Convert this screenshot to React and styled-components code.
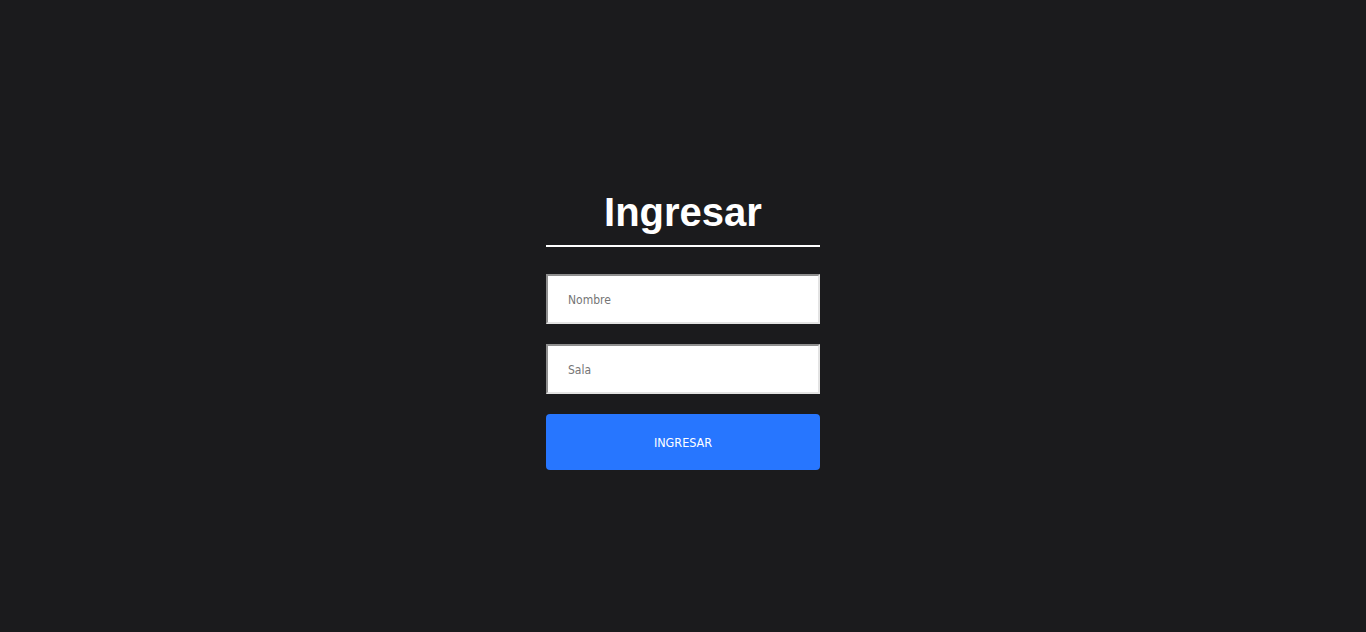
import React from "react";
import styled, { createGlobalStyle } from "styled-components";

const Global = createGlobalStyle`
  html, body { margin: 0; padding: 0; background: #1b1b1d; }
  body { font-family: "DejaVu Sans Condensed", "DejaVu Sans", sans-serif; }
`;

const Page = styled.div`
  min-height: 632px;
  display: flex;
  justify-content: center;
  padding-top: 190px;
  box-sizing: border-box;
`;

const Card = styled.div`
  width: 274px;
  display: flex;
  flex-direction: column;
`;

const Title = styled.h1`
  margin: 0 0 27px;
  padding-bottom: 10px;
  border-bottom: 2px solid #ffffff;
  text-align: center;
  color: #ffffff;
  font-family: "Liberation Sans", Arial, sans-serif;
  font-weight: 700;
  font-size: 40px;
  line-height: 45px;
`;

const Form = styled.form`
  display: flex;
  flex-direction: column;
  gap: 20px;
`;

const Input = styled.input`
  box-sizing: border-box;
  height: 50px;
  width: 100%;
  padding: 2px 20px 0;
  border-width: 2px;
  border-style: solid;
  border-color: #8f8f8f #e3e3e3 #e3e3e3 #8f8f8f;
  background: #ffffff;
  font-family: "DejaVu Sans Condensed", "DejaVu Sans", sans-serif;
  font-size: 12px;
  color: #333;
  outline: none;
  &::placeholder { color: #757575; }
`;

const Button = styled.button`
  height: 56px;
  padding: 0;
  border: none;
  border-radius: 4px;
  background: #2776ff;
  color: #ffffff;
  font-family: "DejaVu Sans Condensed", "DejaVu Sans", sans-serif;
  font-size: 12.5px;
  cursor: pointer;
`;

export default function App() {
  return (
    <>
      <Global />
      <Page>
        <Card>
          <Title>Ingresar</Title>
          <Form onSubmit={(e) => e.preventDefault()}>
            <Input placeholder="Nombre" />
            <Input placeholder="Sala" />
            <Button type="submit">INGRESAR</Button>
          </Form>
        </Card>
      </Page>
    </>
  );
}
